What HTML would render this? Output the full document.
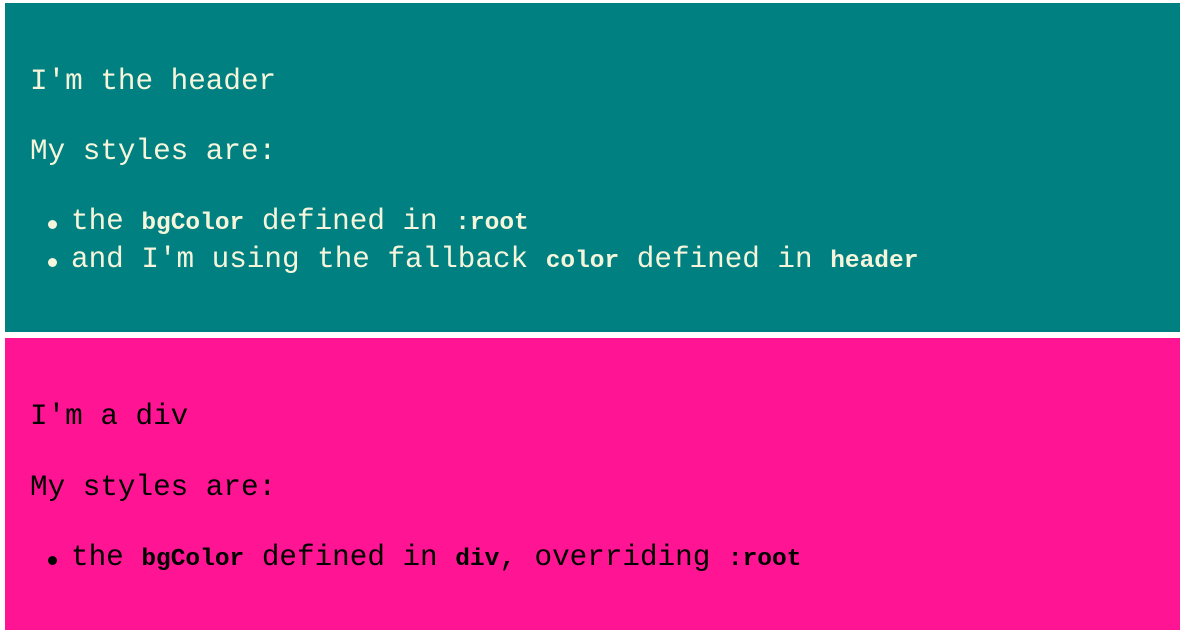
<!DOCTYPE html>
<html><head><meta charset="utf-8"><style>
html,body{margin:0;padding:0;background:#fff;width:1186px;height:638px;overflow:hidden}
.box{position:absolute;left:5px;width:1175px}
.t{background:#008080;top:3px;height:329px;color:#f5f5dc}
.p{background:#ff1493;top:338px;height:292px;color:#000}
.l{position:absolute;left:25px;font-family:"Liberation Mono",monospace;font-size:29.3px;line-height:30px;white-space:pre}
code{font-family:"Liberation Mono",monospace;font-weight:bold;font-size:24.5px}
.b{left:66px}
.b:before{content:"";position:absolute;left:-23px;top:13px;width:9px;height:9px;border-radius:50%;background:currentColor}
</style></head><body>
<div class="box t">
<div class="l" style="top:64px">I'm the header</div>
<div class="l" style="top:134px">My styles are:</div>
<div class="l b" style="top:204px">the <code>bgColor</code> defined in <code>:root</code></div>
<div class="l b" style="top:242px">and I'm using the fallback <code>color</code> defined in <code>header</code></div>
</div>
<div class="box p">
<div class="l" style="top:64px">I'm a div</div>
<div class="l" style="top:135px">My styles are:</div>
<div class="l b" style="top:205px">the <code>bgColor</code> defined in <code>div</code>, overriding <code>:root</code></div>
</div>
</body></html>
